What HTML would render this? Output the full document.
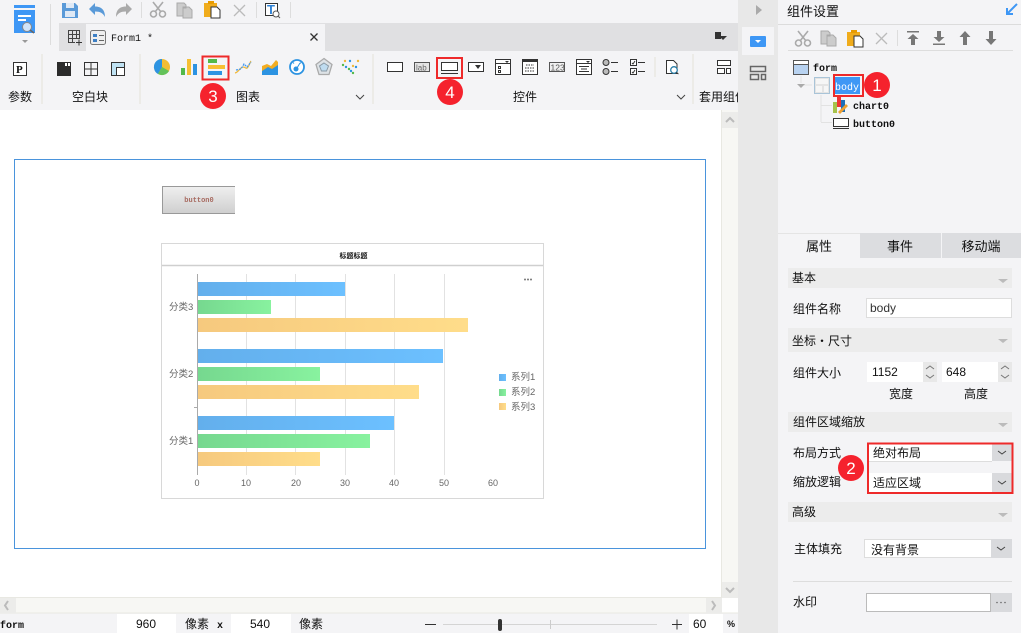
<!DOCTYPE html>
<html><head><meta charset="utf-8"><style>
html,body{margin:0;padding:0;background:#f4f4f6;overflow:hidden}
svg{display:block}
text{font-family:"Liberation Sans","Noto Sans CJK SC",sans-serif;font-size:12px;fill:#111}
.m{font-family:"Liberation Mono","Noto Sans CJK SC",monospace;font-size:10px;fill:#111;font-weight:bold}
.c{text-anchor:middle}
.n{fill:none;stroke:#333;stroke-width:1.3}
.g{fill:none;stroke:#aaa;stroke-width:1.6}
.w{fill:#fff;font-size:17px;text-anchor:middle}
.ax{font-size:9px;fill:#666;text-anchor:middle}
.lb{font-size:9.5px;fill:#666}
</style></head><body>
<svg width="1021" height="633" viewBox="0 0 1021 633" xmlns="http://www.w3.org/2000/svg">
<defs>
<linearGradient id="b"><stop offset="0" stop-color="#63afec"/><stop offset="1" stop-color="#6cc0ff"/></linearGradient>
<linearGradient id="gr"><stop offset="0" stop-color="#76d88f"/><stop offset="1" stop-color="#88f29f"/></linearGradient>
<linearGradient id="o"><stop offset="0" stop-color="#f6c97e"/><stop offset="1" stop-color="#ffdd8a"/></linearGradient>
<linearGradient id="btn" x1="0" x2="0" y1="0" y2="1"><stop offset="0" stop-color="#f0f0f0"/><stop offset="1" stop-color="#cecece"/></linearGradient>
</defs>
<rect width="1021" height="633" fill="#f4f4f6"/>

<!-- top quick bar -->
<rect x="14" y="5" width="21" height="3" fill="#3e97f5"/>
<rect x="14" y="10" width="21" height="23" fill="#3e97f5"/>
<rect x="18" y="15" width="13" height="2" fill="#fff"/><rect x="18" y="19" width="8" height="2" fill="#fff"/>
<circle cx="27" cy="27" r="4.500" fill="#cfe4fa" stroke="#888"/><path d="M30 30l4 3" stroke="#666" stroke-width="1.500"/>
<path d="M22 40h6l-3 3z" fill="#999"/>
<path d="M50.500 4v41" stroke="#ddd"/>
<path d="M62 3h13l3 3v12H62z" fill="#5a9ad8"/><rect x="66" y="3" width="8" height="5" fill="#dfe9f5"/><rect x="65" y="11" width="10" height="6" fill="#dfe9f5"/>
<path d="M89 9l6-6v3.500c6 0 10 3 10 10.500-2-4-5-5.500-10-5.500V15z" fill="#5a9ad8"/>
<path d="M132 9l-6-6v3.500c-6 0-10 3-10 10.500 2-4 5-5.500 10-5.500V15z" fill="#aaa"/>
<path d="M141.500 2v16" stroke="#ddd"/>
<path d="M153 2l8 10M163 2l-8 10" class="g"/><circle cx="153.500" cy="14" r="3" class="g"/><circle cx="162.500" cy="14" r="3" class="g"/>
<path d="M177 3h7l2 2v3h-3v8h-6z M183 7h6l3 3v8h-9z" fill="#ccc" stroke="#aaa"/>
<rect x="204" y="3" width="13" height="14" fill="#f0ac1c"/><path d="M208 1h6v3h-6z" fill="#e89b00"/><path d="M211 7h6l3 3v8h-9z" fill="#fff" stroke="#333"/>
<path d="M234 5l11 11M245 5l-11 11" stroke="#bbb" stroke-width="1.300"/>
<path d="M256.500 2v16M290.500 2v16" stroke="#ddd"/>
<rect x="265.500" y="3.500" width="12" height="12" fill="#fff" stroke="#333"/><text x="267" y="14" style="font-size:13px;font-weight:bold;fill:#2e82d6">T</text><circle cx="276" cy="14" r="3" fill="#fff" stroke="#555"/><path d="M278 16l2 2" stroke="#555"/>

<!-- tab bar -->
<rect x="59" y="23" width="679" height="28" fill="#e0e0e2"/>
<rect x="86" y="24" width="239" height="27" fill="#f4f4f6"/>
<path d="M68.500 30.500h11v12h-11zM68.500 34.500h11M68.500 38.500h11M72.500 30.500v12M76.500 30.500v12" fill="none" stroke="#444"/><rect x="75" y="39" width="7" height="7" fill="#e0e0e2"/><path d="M79 39.500v6M76 42.500h6" stroke="#333"/>
<rect x="90.500" y="30.500" width="15" height="14" rx="2" fill="#eee" stroke="#777"/><rect x="93" y="34" width="4" height="3" fill="#3e7fc4"/><rect x="93" y="39" width="4" height="3" fill="#3e7fc4"/><path d="M99 35.500h5M99 40.500h5" stroke="#666"/>
<text class="m" x="111" y="41" style="font-weight:normal">Form1 *</text>
<path d="M310.500 33.500l7 7M317.500 33.500l-7 7" stroke="#333" stroke-width="1.300"/>
<rect x="715" y="32" width="6" height="7" fill="#333"/><path d="M719 36h8l-4 4z" fill="#333"/>

<!-- ribbon separators -->
<path d="M42 54v50M140 54v50M373 54v50M693 54v50" stroke="#e9e8e2" stroke-width="1.500"/>
<path d="M655 57v20" stroke="#e9e8e2" stroke-width="1.500"/>

<!-- ribbon: param/blocks -->
<rect x="13.500" y="62.500" width="13" height="13" fill="#fff" stroke="#333"/><text x="16" y="73" style="font-family:'Liberation Serif';font-size:11px;font-weight:bold">P</text>
<text class="c" x="20" y="101">参数</text>
<rect x="57" y="62" width="14" height="14" fill="#2b2b2b"/><rect x="65" y="63" width="2" height="3" fill="#fff"/><rect x="68" y="63" width="2" height="3" fill="#fff"/>
<path d="M84.500 62.500h13v13h-13zM84.500 69h13M91 62.500v13" fill="none" stroke="#333"/>
<rect x="111.500" y="62.500" width="13" height="13" fill="#bfe2f3" stroke="#333"/><path d="M116.500 67.500v8h8v-8z" fill="#fff" stroke="#333"/>
<text class="c" x="90" y="101">空白块</text>

<!-- ribbon: charts -->
<circle cx="162" cy="67" r="8" fill="#f3bd35"/><path d="M162 67V59a8 8 0 0 0-4 15z" fill="#2c93e2"/><path d="M162 67l-4 7a8 8 0 0 0 11-3z" fill="#63c25a"/>
<rect x="181" y="68" width="4" height="7" fill="#53b949"/><rect x="187" y="59" width="4" height="16" fill="#f6bf33"/><rect x="193" y="64" width="4" height="11" fill="#2c93e2"/>
<rect x="208" y="59" width="9" height="4" fill="#53b949"/><rect x="208" y="65" width="17" height="4" fill="#f6bf33"/><rect x="208" y="71" width="14" height="4" fill="#2c93e2"/>
<rect x="202.500" y="56.500" width="26" height="23" fill="none" stroke="#ee2a2a" stroke-width="2"/>
<path d="M235 73c4-1 5-6 8-6s3 3 5 0 2-5 3-6" fill="none" stroke="#f0b93a" stroke-width="1.200"/><path d="M236 70l5-1 3-5 3 3 4-5" fill="none" stroke="#3e97f5" stroke-width="1.200" stroke-dasharray="2 1"/>
<path d="M262 66l5-2 4 2 5-6 2 2v13h-16z" fill="#f3ad22"/><path d="M262 71l6-4 4 2 6-4v10h-16z" fill="#2c93e2"/>
<circle cx="297" cy="67" r="7" fill="#fff" stroke="#2c93e2" stroke-width="1.800"/><circle cx="296" cy="69" r="2.500" fill="#2c93e2"/><path d="M297 68l3-5M293 62.500l1 1M301 62.500l-1 1" stroke="#2c93e2"/>
<path d="M324 58.500l8 6-3 10h-10l-3-10z" fill="#dde2e6" stroke="#aaa" stroke-width="1.300"/><path d="M324 63l4.500 3-2 5h-5l-2-5z" fill="#bfdcf0" stroke="#8a9aa5"/>
<g fill="#f0b93a"><circle cx="345" cy="61" r="1.200"/><circle cx="353" cy="66" r="1.200"/><circle cx="358" cy="61" r="1.200"/></g>
<g fill="#2c93e2"><circle cx="350" cy="61" r="1.200"/><circle cx="346" cy="67" r="1.200"/><circle cx="356" cy="67" r="1.200"/><circle cx="351" cy="71" r="1.200"/></g>
<g fill="#53b949"><circle cx="349" cy="69" r="1.200"/><circle cx="353" cy="73" r="1.200"/><circle cx="343" cy="65" r="1.200"/></g>
<text class="c" x="248" y="101">图表</text>
<path d="M356 95l4 4 4-4" fill="none" stroke="#444"/>

<!-- ribbon: widgets -->
<rect x="387.500" y="62.500" width="15" height="9" fill="#fff" stroke="#333"/>
<rect x="414.500" y="62.500" width="15" height="9" fill="#e4e4e4" stroke="#555"/><text x="416" y="70.500" style="font-size:8px;fill:#666">lab</text>
<rect x="441.500" y="62.500" width="16" height="8" fill="#fff" stroke="#333"/><path d="M441 73.500h17" stroke="#333"/>
<rect x="437" y="58" width="25" height="20" fill="none" stroke="#ee2a2a" stroke-width="2"/>
<rect x="468.500" y="62.500" width="15" height="9" fill="#fff" stroke="#333"/><path d="M475 65h6l-3 4z" fill="#333"/>
<rect x="495.500" y="59.500" width="15" height="15" fill="#fff" stroke="#333"/><path d="M495.500 63.500h15" stroke="#333"/><path d="M505 61h4l-2 2z" fill="#333"/><rect x="498.500" y="66.500" width="2" height="2" fill="none" stroke="#333"/><rect x="498.500" y="70.500" width="2" height="2" fill="none" stroke="#333"/>
<rect x="522.500" y="59.500" width="15" height="15" fill="#fff" stroke="#333"/><rect x="522" y="59" width="16" height="3" fill="#333"/><path d="M526 65h8M525 68h10M525 71h10" stroke="#333" stroke-dasharray="1.500 1"/>
<rect x="549.500" y="62.500" width="15" height="9" fill="#f0f0f0" stroke="#555"/><text x="550.500" y="70.500" style="font-size:8.500px;fill:#555">123</text>
<rect x="576.500" y="59.500" width="15" height="15" fill="#fff" stroke="#333"/><path d="M576.500 63.500h15" stroke="#333"/><path d="M586 61h4l-2 2z" fill="#333"/><path d="M579 66.500h10M581 69h6M579 71.500h10" stroke="#333"/>
<circle cx="606" cy="62.500" r="3" fill="#bbb" stroke="#333"/><circle cx="606" cy="71.500" r="3" fill="#bbb" stroke="#333"/><path d="M611 62.500h7M611 71.500h7" stroke="#333"/>
<rect x="630.500" y="59.500" width="6" height="6" fill="#fff" stroke="#333"/><rect x="630.500" y="68.500" width="6" height="6" fill="#fff" stroke="#333"/><path d="M632 63l1 1 2-3M632 72l1 1 2-3" stroke="#333" fill="none"/><path d="M638 62.500h7M638 71.500h7" stroke="#333"/>
<path d="M666.500 60.500h7l3.500 3.500v9.500h-10.500z" fill="#fff" stroke="#333"/><circle cx="674" cy="70" r="3.300" fill="#fff" stroke="#2c7fa8" stroke-width="1.300"/><path d="M676 72.500l2.500 1.500" stroke="#333"/>
<text class="c" x="525" y="101">控件</text>
<path d="M677 95l4 4 4-4" fill="none" stroke="#444"/>
<rect x="717.500" y="60.500" width="13" height="5" fill="#fff" stroke="#333"/><rect x="717.500" y="68.500" width="7" height="5" fill="#fff" stroke="#333"/><rect x="726.500" y="68.500" width="4" height="5" fill="#fff" stroke="#333"/>
<text x="699" y="101">套用组件</text>

<!-- canvas -->
<rect x="0" y="110" width="722" height="488" fill="#fff"/>
<rect x="14.500" y="159.500" width="691" height="389" fill="#fff" stroke="#4a94dc"/>
<rect x="162" y="186" width="73" height="28" fill="url(#btn)"/><path d="M235 186.500H162.500V213.500H235" fill="none" stroke="#999"/>
<text x="199" y="202" class="c" style="font-family:'Liberation Mono';font-size:7px;font-weight:bold;fill:#a76a60">button0</text>

<rect x="161.500" y="243.500" width="382" height="255" fill="#fff" stroke="#d8d8d8"/>
<path d="M162 265.500h381" stroke="#cfcfcf" stroke-width="1.500"/>
<text class="c" x="353.500" y="258" style="font-size:7px;font-weight:bold;fill:#111">标题标题</text>
<circle cx="525" cy="279.500" r="1" fill="#777"/><circle cx="528" cy="279.500" r="1" fill="#777"/><circle cx="531" cy="279.500" r="1" fill="#777"/>
<path d="M246.500 274v201M295.500 274v201M345.500 274v201M394.500 274v201M444.500 274v201" stroke="#e2e2e2"/>
<path d="M197.500 274v201" stroke="#aaa"/>
<path d="M194 407.500h3" stroke="#aaa"/>
<rect x="198" y="282" width="147" height="14" fill="url(#b)"/>
<rect x="198" y="300" width="73" height="14" fill="url(#gr)"/>
<rect x="198" y="318" width="270" height="14" fill="url(#o)"/>
<rect x="198" y="349" width="245" height="14" fill="url(#b)"/>
<rect x="198" y="367" width="122" height="14" fill="url(#gr)"/>
<rect x="198" y="385" width="221" height="14" fill="url(#o)"/>
<rect x="198" y="416" width="196" height="14" fill="url(#b)"/>
<rect x="198" y="434" width="172" height="14" fill="url(#gr)"/>
<rect x="198" y="452" width="122" height="14" fill="url(#o)"/>
<text class="lb" x="169" y="310">分类3</text>
<text class="lb" x="169" y="377">分类2</text>
<text class="lb" x="169" y="444">分类1</text>
<text class="ax" x="197" y="486">0</text><text class="ax" x="246" y="486">10</text><text class="ax" x="296" y="486">20</text><text class="ax" x="345" y="486">30</text><text class="ax" x="394" y="486">40</text><text class="ax" x="444" y="486">50</text><text class="ax" x="493" y="486">60</text>
<rect x="499" y="374" width="7" height="7" fill="url(#b)"/><text class="lb" x="511" y="380">系列1</text>
<rect x="499" y="389" width="7" height="7" fill="url(#gr)"/><text class="lb" x="511" y="395">系列2</text>
<rect x="499" y="403" width="7" height="7" fill="url(#o)"/><text class="lb" x="511" y="410">系列3</text>

<!-- scrollbars -->
<rect x="722" y="110" width="16" height="488" fill="#f7f7f4"/>
<path d="M721.500 110v488" stroke="#e8e8e2"/>
<rect x="722" y="112" width="16" height="16" fill="#ececea"/>
<path d="M726 122l4-4 4 4" fill="none" stroke="#bbb" stroke-width="2"/>
<rect x="722" y="582" width="16" height="16" fill="#ececea"/>
<path d="M726 588l4 4 4-4" fill="none" stroke="#bbb" stroke-width="2"/>
<rect x="722" y="598" width="16" height="15" fill="#fff"/>
<rect x="0" y="598" width="722" height="15" fill="#f7f7f4"/>
<path d="M0 597.500h722M0 613h738" stroke="#e8e8e2"/>
<rect x="0" y="598" width="16" height="15" fill="#ececea"/><path d="M8 601l-3 4.500 3 4.500" fill="none" stroke="#bbb" stroke-width="2"/>
<rect x="706" y="598" width="16" height="15" fill="#ececea"/><path d="M712 601l3 4.500-3 4.500" fill="none" stroke="#bbb" stroke-width="2"/>

<!-- status bar -->
<text class="m" x="0" y="628">form</text>
<rect x="117" y="614" width="59" height="19" fill="#fff"/>
<text class="c" x="146" y="628">960</text>
<text x="185" y="628">像素</text><text class="m" x="217" y="628">x</text>
<rect x="231" y="614" width="60" height="19" fill="#fff"/>
<text class="c" x="260" y="628">540</text>
<text x="299" y="628">像素</text>
<path d="M425 624.500h11M672 624.500h10M677 619.500v10" stroke="#333"/>
<path d="M443 624.500h214" stroke="#d4d4d4"/><path d="M550.500 620v9" stroke="#ccc"/>
<rect x="498" y="619" width="4" height="12" rx="2" fill="#333"/>
<rect x="689" y="614" width="34" height="19" fill="#fff"/>
<text x="693" y="628">60</text>
<text x="727" y="627" style="font-size:9px;font-weight:bold">%</text>

<!-- side strip -->
<rect x="738" y="0" width="40" height="633" fill="#e8e8e8"/>
<path d="M756 5l6 5-6 5z" fill="#aaa"/>
<rect x="742" y="27" width="32" height="28" fill="#f4f4f6"/>
<rect x="750" y="36" width="16" height="11" rx="1" fill="#3e97f5"/><path d="M755 40h6l-3 3z" fill="#fff"/>
<path d="M750.500 66.500h15v5h-15zM750.500 74.500h8v5h-8zM761.500 74.500h4v5h-4z" fill="none" stroke="#666" stroke-width="1.500"/>

<!-- right panel -->
<rect x="778" y="0" width="243" height="633" fill="#f4f4f6"/>
<text x="787" y="16" style="font-size:13px">组件设置</text>
<path d="M1017 4l-10 10M1007 8v6h6" fill="none" stroke="#3e97f5" stroke-width="2"/>
<path d="M778 24.500h243" stroke="#dcdcdc"/>
<path d="M798 31l8 10M808 31l-8 10" class="g"/><circle cx="798.500" cy="43" r="3" class="g"/><circle cx="807.500" cy="43" r="3" class="g"/>
<path d="M821 31h7l2 2v3h-3v8h-6zM827 35h6l3 3v8h-9z" fill="#ccc" stroke="#aaa"/>
<rect x="847" y="32" width="13" height="14" fill="#f0ac1c"/><path d="M851 30h6v3h-6z" fill="#e89b00"/><path d="M854 36h6l3 3v8h-9z" fill="#fff" stroke="#333"/>
<path d="M876 33l11 11M887 33l-11 11" stroke="#bbb" stroke-width="1.300"/>
<path d="M897.500 30v16M788 50.500h225" stroke="#ddd"/>
<g fill="#777"><path d="M907 31h12v1.500h-12zM913 34l5.500 5h-3.500v6h-4v-6h-3.500z"/><path d="M933 45h12v-1.500h-12zM939 42l5.500-5h-3.500v-6h-4v6h-3.500z"/><path d="M965 31l5.500 6h-3.500v8h-4v-8h-3.500z"/><path d="M991 45l5.500-6h-3.500v-8h-4v8h-3.500z"/></g>
<rect x="793.500" y="60.500" width="15" height="14" fill="#b8d2f0" stroke="#555"/><rect x="794" y="61" width="14" height="3" fill="#fff"/><path d="M793.500 64.500h15" stroke="#555"/>
<text class="m" x="813" y="71">form</text>
<path d="M801 76v7M804 85h8M821 95v27M821 105.500h11M821 122.500h11" stroke="#e2e2e2"/>
<path d="M797 84h8l-4 4z" fill="#aaa"/>
<rect x="814.500" y="77.500" width="15" height="16" fill="#e4e4e4" stroke="#a9c4d8"/><rect x="816" y="79" width="12" height="5" fill="#f6f6f6"/><rect x="816" y="86" width="6" height="6" fill="#f6f6f6"/><rect x="824" y="86" width="4" height="6" fill="#f6f6f6"/>
<rect x="834" y="77" width="26" height="17" fill="#3e97f5"/>
<text class="m" x="835" y="90" style="fill:#fff;font-weight:normal">body</text>
<rect x="834" y="75" width="29" height="21" fill="none" stroke="#ee2a2a" stroke-width="2"/>
<rect x="833" y="102" width="4" height="11" fill="#a6c24b"/><rect x="837" y="97" width="4" height="10" fill="#e33"/><rect x="841" y="100" width="4" height="12" fill="#1f6fb8"/><path d="M838 112l8-8 2 2-8 8z" fill="#f0a030"/>
<text class="m" x="853" y="109">chart0</text>
<rect x="833.500" y="118.500" width="15" height="8" fill="#fff" stroke="#333"/><path d="M833 128.500h16" stroke="#333"/>
<text class="m" x="853" y="127">button0</text>

<!-- property tabs -->
<rect x="860" y="233" width="81" height="25" fill="#dcdde0"/>
<rect x="942" y="233" width="79" height="25" fill="#dcdde0"/>
<path d="M778 233.500h82" stroke="#e4e4e4"/>
<text class="c" x="819" y="251" style="font-size:13px">属性</text>
<text class="c" x="900" y="251" style="font-size:13px">事件</text>
<text class="c" x="981" y="251" style="font-size:13px">移动端</text>

<!-- sections -->
<rect x="788" y="268" width="224" height="20" fill="#ececec"/>
<text x="792" y="282">基本</text><path d="M998 279h10l-5 4z" fill="#bbb"/>
<text x="793" y="313">组件名称</text>
<rect x="866.500" y="298.500" width="145" height="19" fill="#fff" stroke="#ddd"/>
<text x="870" y="312" style="fill:#333">body</text>
<rect x="788" y="328" width="224" height="24" fill="#ececec"/>
<text x="792" y="345">坐标・尺寸</text><path d="M998 339h10l-5 4z" fill="#bbb"/>
<text x="793" y="377">组件大小</text>
<rect x="867" y="362" width="56" height="20" fill="#fff"/><rect x="923" y="362" width="14" height="20" fill="#e8e8e8"/>
<text x="872" y="376">1152</text>
<rect x="942" y="362" width="56" height="20" fill="#fff"/><rect x="998" y="362" width="14" height="20" fill="#e8e8e8"/>
<text x="946" y="376">648</text>
<path d="M926 369l4-3 4 3M926 375l4 3 4-3M1001 369l4-3 4 3M1001 375l4 3 4-3" fill="none" stroke="#777"/>
<text class="c" x="901" y="398">宽度</text><text class="c" x="976" y="398">高度</text>
<rect x="788" y="412" width="224" height="20" fill="#ececec"/>
<text x="793" y="426">组件区域缩放</text><path d="M998 423h10l-5 4z" fill="#bbb"/>

<text x="793" y="457">布局方式</text>
<text x="793" y="486">缩放逻辑</text>
<rect x="869" y="444" width="143" height="17" fill="#fff"/><rect x="992" y="444" width="20" height="17" fill="#d9dadd"/>
<path d="M869 461.500h123" stroke="#ddd"/>
<text x="873" y="457">绝对布局</text><path d="M998 451l4 3 4-3" fill="none" stroke="#444"/>
<rect x="869" y="473" width="143" height="19" fill="#fff"/><rect x="992" y="473" width="20" height="19" fill="#d9dadd"/>
<text x="873" y="487">适应区域</text><path d="M998 481l4 3 4-3" fill="none" stroke="#444"/>
<rect x="868" y="443.500" width="144.500" height="49.500" fill="none" stroke="#ee2a2a" stroke-width="2"/>
<rect x="788" y="502" width="224" height="20" fill="#ececec"/>
<text x="792" y="516">高级</text><path d="M998 513h10l-5 4z" fill="#bbb"/>
<text x="794" y="553">主体填充</text>
<rect x="864.500" y="539.500" width="147" height="18" fill="#fff" stroke="#ddd"/><rect x="991" y="539" width="21" height="19" fill="#d9dadd"/>
<text x="871" y="554">没有背景</text><path d="M997 547l4 3 4-3" fill="none" stroke="#444"/>
<path d="M793 581.500h219" stroke="#ddd"/>
<text x="793" y="606">水印</text>
<rect x="866.500" y="593.500" width="124" height="18" fill="#fff" stroke="#bbb"/><rect x="991" y="593" width="21" height="19" fill="#d9dadd"/>
<circle cx="997" cy="602.500" r=".8" fill="#666"/><circle cx="1001" cy="602.500" r=".8" fill="#666"/><circle cx="1005" cy="602.500" r=".8" fill="#666"/>

<!-- callouts -->
<circle cx="877" cy="85" r="13" fill="#f5222d"/><text class="w" x="877" y="91">1</text>
<circle cx="851" cy="468" r="13" fill="#f5222d"/><text class="w" x="851" y="474">2</text>
<circle cx="213" cy="96" r="13" fill="#f5222d"/><text class="w" x="213" y="102">3</text>
<circle cx="450" cy="92" r="13" fill="#f5222d"/><text class="w" x="450" y="98">4</text>
</svg>
</body></html>
